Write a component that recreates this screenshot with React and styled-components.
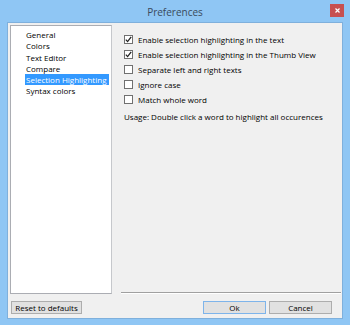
import React, { useState } from "react";
import styled, { createGlobalStyle } from "styled-components";

const Global = createGlobalStyle`
  html, body { margin: 0; padding: 0; background: #8fc6f4; }
  * { box-sizing: border-box; }
`;

const Frame = styled.div`
  width: 350px;
  height: 325px;
  background: #8fc6f4;
  display: flex;
  flex-direction: column;
  font-family: "Open Sans", "Noto Sans", sans-serif;
  overflow: hidden;
`;

const TitleBar = styled.div`
  height: 22px;
  position: relative;
  display: flex;
  align-items: center;
  justify-content: center;
`;

const Title = styled.div`
  font-size: 10px;
  color: #3a4a5c;
  padding-top: 1px;
`;

const CloseButton = styled.div`
  position: absolute;
  right: 6px;
  top: 4px;
  width: 14px;
  height: 13px;
  background: #c75050;
  display: flex;
  align-items: center;
  justify-content: center;
`;

const Client = styled.div`
  margin: 0 7px 6px 7px;
  flex: 1;
  background: #f0f0f0;
  border: 1px solid #7fb0dc;
  display: flex;
  flex-direction: column;
  padding: 2px 1px 4px 2px;
`;

const Main = styled.div`
  flex: 1;
  display: flex;
  gap: 9px;
`;

const ListBox = styled.div`
  width: 102px;
  background: #fff;
  border: 1px solid #abadb3;
  border-right-color: #c6c8cc;
  padding: 3px 2px 0 14px;
  display: flex;
  flex-direction: column;
`;

const ListItem = styled.div`
  height: 11.3px;
  line-height: 11px;
  font-size: 8px;
  padding-left: 1px;
  color: ${(p) => (p.$selected ? "#fff" : "#000")};
  background: ${(p) => (p.$selected ? "#3399ff" : "transparent")};
  white-space: nowrap;
`;

const Right = styled.div`
  flex: 1;
  display: flex;
  flex-direction: column;
`;

const Options = styled.div`
  flex: 1;
  display: flex;
  flex-direction: column;
  padding: 10px 0 0 3px;
  gap: 6px;
`;

const Row = styled.label`
  display: flex;
  align-items: center;
  gap: 5px;
  height: 9px;
  font-size: 8px;
  color: #000;
  white-space: nowrap;
`;

const Box = styled.span`
  width: 9px;
  height: 9px;
  border: 1px solid #707070;
  background: #fff;
  display: flex;
  align-items: center;
  justify-content: center;
  flex: none;
`;

const Usage = styled.div`
  font-size: 8px;
  color: #000;
  margin-top: 1px;
  white-space: nowrap;
`;

const Separator = styled.div`
  height: 2px;
  border-top: 1px solid #a0a0a0;
  border-bottom: 1px solid #fff;
`;

const Footer = styled.div`
  display: flex;
  align-items: center;
  padding: 7px 9px 0 1px;
`;

const Button = styled.button`
  height: 13px;
  width: ${(p) => p.$w}px;
  margin-left: ${(p) => p.$ml || 0}px;
  padding: 0;
  font-family: inherit;
  font-size: 8px;
  line-height: 11px;
  color: #000;
  background: #e1e1e1;
  border: 1px solid ${(p) => (p.$default ? "#7eb4ea" : "#adadad")};
`;

const Spacer = styled.div`
  flex: 1;
`;

const Check = () => (
  <svg width="7" height="7" viewBox="0 0 7 7">
    <path d="M0.8 3.6 L2.6 5.6 L6.2 0.8" fill="none" stroke="#222" strokeWidth="1.3" />
  </svg>
);

const items = [
  "General",
  "Colors",
  "Text Editor",
  "Compare",
  "Selection Highlighting",
  "Syntax colors",
];

const options = [
  ["Enable selection highlighting in the text", true],
  ["Enable selection highlighting in the Thumb View", true],
  ["Separate left and right texts", false],
  ["Ignore case", false],
  ["Match whole word", false],
];

export default function App() {
  const [selected] = useState(4);
  return (
    <Frame>
      <Global />
      <TitleBar>
        <Title>Preferences</Title>
        <CloseButton>
          <svg width="5" height="5" viewBox="0 0 5 5">
            <path d="M0.5 0.5 L4.5 4.5 M4.5 0.5 L0.5 4.5" stroke="#fff" strokeWidth="1.2" />
          </svg>
        </CloseButton>
      </TitleBar>
      <Client>
        <Main>
          <ListBox>
            {items.map((t, i) => (
              <ListItem key={t} $selected={i === selected}>
                {t}
              </ListItem>
            ))}
          </ListBox>
          <Right>
            <Options>
              {options.map(([t, c]) => (
                <Row key={t}>
                  <Box>{c && <Check />}</Box>
                  {t}
                </Row>
              ))}
              <Usage>Usage: Double click a word to highlight all occurences</Usage>
            </Options>
            <Separator />
          </Right>
        </Main>
        <Footer>
          <Button $w={71}>Reset to defaults</Button>
          <Spacer />
          <Button $w={63} $default>Ok</Button>
          <Button $w={63} $ml={3}>Cancel</Button>
        </Footer>
      </Client>
    </Frame>
  );
}
